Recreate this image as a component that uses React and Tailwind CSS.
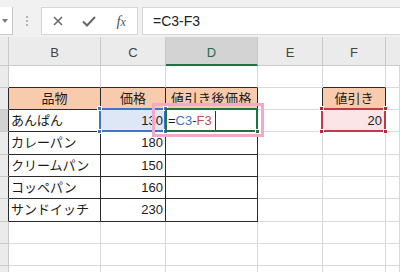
import React from 'react';
import clsx from 'clsx';

const FONT = { fontFamily: '"Liberation Sans", "Noto Sans CJK JP", sans-serif' };

// one spreadsheet cell; r / b switch the right and bottom edges to the table's ink line
const Cell = ({ r, b, className, children }) => (
    <div
        className={clsx(
            'relative flex items-center border-r border-b text-[13px] text-[#1c1c1c] whitespace-nowrap',
            r ? 'border-r-[#2a2a2a]' : 'border-r-[#d9d9d9]',
            b ? 'border-b-[#2a2a2a]' : 'border-b-[#d9d9d9]',
            className
        )}
    >
        {children}
    </div>
);

const RowHead = ({ r, active }) => (
    <div
        className={clsx(
            'border-r border-b border-b-[#c9c9c9]',
            active ? 'bg-[#d2d2d2]' : 'bg-[#ebebeb]',
            r ? 'border-r-[#2a2a2a]' : 'border-r-[#c9c9c9]'
        )}
    />
);

const Handle = ({ className }) => <span className={clsx('absolute w-[5px] h-[5px] border border-white', className)} />;

const products = [
    ['カレーパン', 180],
    ['クリームパン', 150],
    ['コッペパン', 160],
    ['サンドイッチ', 230],
];

const ROW = 'grid grid-cols-[9px_92px_65px_92px_65px_63px_1fr]';

export default function App() {
    return (
        <div className="relative w-[400px] h-[272px] overflow-hidden bg-white" style={FONT}>
            {/* formula bar */}
            <div className="flex h-[37px] pt-[7px] bg-[#f1f1f1]">
                <div className="w-[13px] h-[28px] bg-white border-r border-b border-[#c8c8c8] flex items-center pl-[2px]">
                    <svg width="6" height="4" viewBox="0 0 6 4"><path d="M0 0h6L3 4z" fill="#7a7a7a" /></svg>
                </div>
                <div className="ml-[13px] w-[2px] h-[28px] flex flex-col items-center justify-center gap-[2px]">
                    <span className="w-[2px] h-[2px] bg-[#b4b4b4]" />
                    <span className="w-[2px] h-[2px] bg-[#b4b4b4]" />
                    <span className="w-[2px] h-[2px] bg-[#b4b4b4]" />
                </div>
                <div className="ml-[13px] w-[97px] h-[28px] bg-white border border-[#d6d6d6] grid grid-cols-3 items-center justify-items-center">
                    <svg width="10" height="10" viewBox="0 0 10 10">
                        <path d="M1 1l8 8M9 1l-8 8" stroke="#666" strokeWidth="1.5" />
                    </svg>
                    <svg width="14" height="11" viewBox="0 0 14 11">
                        <path d="M1 5.5l4 4 8-8.5" stroke="#666" strokeWidth="2" fill="none" />
                    </svg>
                    <span className="italic text-[15px] text-[#555] leading-none" style={{ fontFamily: '"Liberation Serif", serif' }}>
                        f<span className="text-[12px]">x</span>
                    </span>
                </div>
                <div className="ml-[4px] flex-1 h-[28px] bg-white border-y border-l border-[#d6d6d6] flex items-center pl-[10px] text-[14px] text-[#222]">
                    =C3-F3
                </div>
            </div>

            {/* column headings */}
            <div className={clsx(ROW, 'h-[29px] text-[13px] text-[#444]')}>
                <div className="bg-[#ebebeb] border-r border-b border-[#c9c9c9]" />
                <div className="bg-[#ebebeb] border-r border-b border-[#c9c9c9] flex items-center justify-center pt-[3px]">B</div>
                <div className="bg-[#ebebeb] border-r border-b border-[#c9c9c9] flex items-center justify-center pt-[3px]">C</div>
                <div className="bg-[#d3d3d3] border-r border-[#c9c9c9] border-b-2 border-b-[#217346] flex items-center justify-center pt-[4px] text-[#2a6a45]">D</div>
                <div className="bg-[#ebebeb] border-r border-b border-[#c9c9c9] flex items-center justify-center pt-[3px]">E</div>
                <div className="bg-[#ebebeb] border-r border-b border-[#c9c9c9] flex items-center justify-center pt-[3px]">F</div>
                <div className="bg-[#ebebeb] border-b border-[#c9c9c9]" />
            </div>

            {/* row 1 */}
            <div className={clsx(ROW, 'h-[22px]')}>
                <RowHead />
                <Cell b />
                <Cell b />
                <Cell b />
                <Cell />
                <Cell b />
                <Cell />
            </div>

            {/* row 2: headings of both tables */}
            <div className={clsx(ROW, 'h-[22px]')}>
                <RowHead r />
                <Cell r b className="bg-[#f8cbad] justify-center">品物</Cell>
                <Cell r b className="bg-[#f8cbad] justify-center">価格</Cell>
                <Cell r b className="bg-[#f8cbad] justify-center tracking-[0.5px]">値引き後価格</Cell>
                <Cell r />
                <Cell r b className="bg-[#f8cbad] justify-center">値引き</Cell>
                <Cell />
            </div>

            {/* row 3: formula being typed */}
            <div className={clsx(ROW, 'h-[22px]')}>
                <RowHead r active />
                <Cell r b className="pl-[2px]">あんぱん</Cell>
                <Cell r b className="bg-[#dde7f5] justify-end pr-[2px]">
                    130
                    <div className="absolute z-10 -left-[2px] -top-[2px] -right-[1px] -bottom-[1px] border-2 border-[#4472c4]">
                        <Handle className="-left-[4px] -top-[4px] bg-[#4472c4]" />
                        <Handle className="-right-[4px] -top-[4px] bg-[#4472c4]" />
                        <Handle className="-left-[4px] -bottom-[4px] bg-[#4472c4]" />
                        <Handle className="-right-[4px] -bottom-[4px] bg-[#4472c4]" />
                    </div>
                </Cell>
                <Cell r b className="pl-[2px]">
                    <span>=</span>
                    <span className="text-[#4472c4]">C3</span>
                    <span>-</span>
                    <span className="text-[#c0504d]">F3</span>
                    <span className="ml-[3px] w-px h-[19px] bg-[#333]" />
                    <div className="absolute z-10 -left-[1px] -top-[2px] -right-[1px] -bottom-[1px] border-2 border-[#217346]">
                        <Handle className="-right-[4px] -bottom-[4px] bg-[#217346]" />
                    </div>
                </Cell>
                <Cell />
                <Cell r b className="bg-[#fbe5e6] justify-end pr-[3px]">
                    20
                    <div className="absolute z-10 -left-[2px] -top-[2px] -right-[1px] -bottom-[1px] border-2 border-[#c0394d]">
                        <Handle className="-left-[4px] -top-[4px] bg-[#b8283c]" />
                        <Handle className="-right-[4px] -top-[4px] bg-[#b8283c]" />
                        <Handle className="-left-[4px] -bottom-[4px] bg-[#b8283c]" />
                        <Handle className="-right-[4px] -bottom-[4px] bg-[#b8283c]" />
                    </div>
                </Cell>
                <Cell />
            </div>

            {/* rows 4-7 */}
            {products.map(([name, price], i) => (
                <div key={name} className={clsx(ROW, i % 3 === 0 ? 'h-[23px]' : 'h-[22px]')}>
                    <RowHead r />
                    <Cell r b className="pl-[2px]">{name}</Cell>
                    <Cell r b className="justify-end pr-[2px]">{price}</Cell>
                    <Cell r b />
                    <Cell />
                    <Cell />
                    <Cell />
                </div>
            ))}

            {/* empty rows below */}
            {['h-[22px]', 'h-[22px]', 'h-[22px]'].map((h, i) => (
                <div key={i} className={clsx(ROW, h)}>
                    <RowHead />
                    <Cell />
                    <Cell />
                    <Cell />
                    <Cell />
                    <Cell />
                    <Cell />
                </div>
            ))}

            {/* pink callout around the edited cell */}
            <div className="absolute z-20 left-[152px] top-[103px] w-[112px] h-[34px] border-[3px] border-[#f5a8c8] pointer-events-none" />
        </div>
    );
}
